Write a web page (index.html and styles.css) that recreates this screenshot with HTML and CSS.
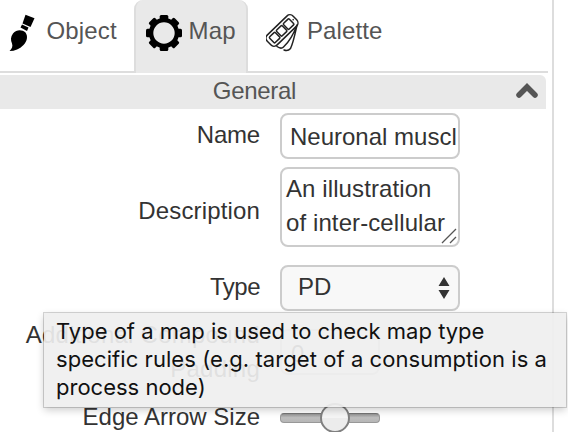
FILE: index.html
```html
<!DOCTYPE html>
<html lang="en">
<head>
<meta charset="utf-8">
<title>Map properties</title>
<link rel="stylesheet" href="styles.css">
</head>
<body>
<main class="panel">
  <nav class="tabs">
    <a class="tab tab-object">
      <svg class="icon" width="27" height="38" viewBox="0 0 27 38"><path d="M17.500 .8 26.500 4.300 22.500 13 14.500 9.500Z"/><path d="M14 10.500 20.500 13.500 19 17 12.500 13.500Z"/><path d="M5 19.500C8.500 15.500 14 15.500 17.500 18.500C20 22 19.500 27 15.500 31C11.500 35 7 37 1.500 37C4 34.500 5 32.500 4 29.500C2.500 26.500 2.500 22.500 5 19.500Z"/></svg>
      <span class="t-object">Object</span>
    </a>
    <a class="tab tab-map">
      <svg class="icon" width="36" height="36" viewBox="-18 -18 36 36"><circle r="12.900" fill="none" stroke="#000" stroke-width="4.400"/><g id="teeth"><rect x="-4.300" y="-18" width="8.600" height="6" rx="1.500"/><rect x="-4.300" y="12" width="8.600" height="6" rx="1.500"/><rect x="-18" y="-4.300" width="6" height="8.600" rx="1.500"/><rect x="12" y="-4.300" width="6" height="8.600" rx="1.500"/></g><use href="#teeth" transform="rotate(45)"/></svg>
      <span class="t-map">Map</span>
    </a>
    <a class="tab tab-palette">
      <svg class="icon" width="33" height="38" viewBox="0 0 33 38" fill="none" stroke="#222" stroke-width="1.500" stroke-linecap="round"><g transform="translate(16 16.500) rotate(-44)"><rect x="-18" y="-7" width="36" height="14" rx="4.500"/><rect x="-14.200" y="-4" width="8" height="8" rx="1"/><rect x="-4.500" y="-4" width="8" height="8" rx="1"/><rect x="5.200" y="-4" width="8" height="8" rx="1"/><path d="M15.500 0h.1"/></g><path d="M31 11C28 19 23 28 17.500 33Q15 35.500 11 32.500M31 11C29 20 27.500 28 24.500 34.500Q22 37.500 18 36"/></svg>
      <span class="t-palette">Palette</span>
    </a>
  </nav>
  <header class="section-head">
    <span>General</span>
    <svg class="chevron" width="22" height="16" viewBox="0 0 22 16"><path d="M3 12 11 4 19 12"/></svg>
  </header>
  <section class="form">
    <div class="row row-name"><label>Name</label><div class="field text-field">Neuronal muscl</div></div>
    <div class="row row-desc"><label>Description</label><div class="field area-field">An illustration<br>of inter-cellular<svg class="grip" width="16" height="16" viewBox="0 0 16 16"><path d="M1 15 15 1M9 15 15 9"/></svg></div></div>
    <div class="row row-type"><label>Type</label><div class="field select-field"><span>PD</span><svg width="12" height="22" viewBox="0 0 12 22"><path d="M6 0 11.500 9H.5ZM6 22 11.500 13H.5Z"/></svg></div></div>
    <div class="row row-padding"><label>Additional Compound Padding</label><div class="field number-field">0</div></div>
    <div class="row row-arrow"><label>Edge Arrow Size</label><div class="slider"><div class="thumb"></div></div></div>
  </section>
</main>
<div class="tooltip" role="tooltip">Type of a map is used to check map type<br><span class="tip-two">specific rules (e.g. target of a consumption is a</span><br>process node)</div>
</body>
</html>
```
FILE: styles.css
```css
* { box-sizing: border-box; }
body {
  margin: 0;
  width: 568px;
  height: 432px;
  overflow: hidden;
  position: relative;
  background: #fff;
  color: #333;
  font: 24px/34px "Liberation Sans", Arial, sans-serif;
}
.panel {
  width: 554px;
  height: 432px;
  border-right: 2px solid #ddd;
  overflow: hidden;
}
.tabs {
  display: flex;
  width: 548px;
  height: 73px;
  border-bottom: 2px solid #ddd;
  color: #555;
}
.tab { display: flex; height: 73px; align-items: flex-start; white-space: nowrap; }
.tab span { margin-top: 14px; }
.icon { flex: none; margin-top: 14px; }
.tab-object { width: 134px; padding-left: 8px; }
.t-object { margin-left: 11.5px; letter-spacing: .15px; }
.tab-map {
  width: 114px;
  padding-left: 10px;
  background: #e9e9e9;
  border: solid #ddd;
  border-width: 0 2px;
  border-radius: 9px 9px 0 0;
}
.tab-map .icon { margin-top: 15px; }
.t-map { margin-left: 6.5px; letter-spacing: .2px; }
.tab-palette { padding-left: 18px; }
.t-palette { margin-left: 8px; letter-spacing: .1px; }
.section-head {
  display: flex;
  justify-content: center;
  position: relative;
  width: 546px;
  height: 34px;
  margin-top: 2px;
  padding-right: 37px;
  background: #e9e9e9;
  border-radius: 0 6px 0 0;
  color: #555;
}
.section-head span { margin-top: -1px; letter-spacing: -.3px; }
.chevron { position: absolute; right: 8px; top: 8px; fill: none; stroke: #555; stroke-width: 5.5; stroke-linecap: round; }
.form { padding-top: 4px; }
.row { display: grid; grid-template-columns: 260px 180px; column-gap: 20px; align-items: start; }
label { text-align: right; }
.field { border: 2px solid #ccc; border-radius: 8px; background: #fff; overflow: hidden; white-space: nowrap; }
.row-name { height: 54px; }
.row-name label { padding-top: 5px; letter-spacing: -.2px; }
.text-field { height: 46px; padding: 5px 0 0 8px; }
.row-desc { height: 98px; }
.row-desc label { padding-top: 27px; letter-spacing: .15px; }
.area-field { position: relative; height: 80px; padding: 3px 0 0 4px; letter-spacing: .1px; }
.grip { position: absolute; right: 1px; bottom: 1px; fill: none; stroke: #555; stroke-width: 1.3; }
.row-type { height: 53px; }
.row-type label { padding-top: 5px; letter-spacing: -.5px; }
.select-field { display: flex; justify-content: space-between; height: 46px; padding: 3px 8px 0 16px; background: #f8f8f8; }
.select-field svg { margin-top: 7px; fill: #333; }
.row-padding { height: 82px; }
.row-padding label { padding-left: 10px; letter-spacing: .25px; }
.number-field { width: 100px; height: 46px; margin-top: 11px; padding: 6px 0 0 9px; }
.slider {
  width: 100px;
  height: 10px;
  margin-top: 13px;
  border: 1px solid #989898;
  border-top-color: #747474;
  border-radius: 4px;
  background: linear-gradient(#949494, #bdbdbd 45%, #b6b6b6);
}
.thumb {
  width: 30px;
  height: 30px;
  margin: -11px 0 0 39px;
  border: 2px solid #808080;
  border-radius: 50%;
  background: linear-gradient(#f5f5f5 50%, #ececec 50%);
}
.tooltip {
  position: absolute;
  left: 44px;
  top: 313px;
  width: 522px;
  height: 94px;
  padding: 4px 0 0 12px;
  background: rgba(239, 239, 239, .92);
  box-shadow: 0 0 0 1px rgba(0, 0, 0, .16), 0 3px 8px rgba(0, 0, 0, .2);
  color: #111;
  font: 22px/28px Inter, sans-serif;
  white-space: nowrap;
}
.tip-two { letter-spacing: .06px; }
```
